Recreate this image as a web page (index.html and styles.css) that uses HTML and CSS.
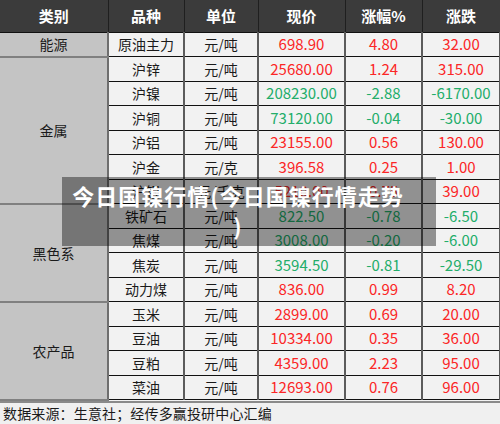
FILE: index.html
```html
<!DOCTYPE html>
<html lang="zh-CN">
<head>
<meta charset="utf-8">
<link rel="stylesheet" href="styles.css">
</head>
<body>
<div class="page">
  <table class="quotes">
    <colgroup>
      <col class="c1"><col class="c2"><col class="c3"><col class="c4"><col class="c5"><col class="c6">
    </colgroup>
    <thead>
      <tr class="head"><th>类别</th><th>品种</th><th>单位</th><th>现价</th><th>涨幅%</th><th>涨跌</th></tr>
    </thead>
    <tbody>
      <tr><td class="cat">能源</td><td>原油主力</td><td>元/吨</td><td class="num up">698.90</td><td class="num up">4.80</td><td class="num up">32.00</td></tr>
      <tr><td class="cat" rowspan="6">金属</td><td>沪锌</td><td>元/吨</td><td class="num up">25680.00</td><td class="num up">1.24</td><td class="num up">315.00</td></tr>
      <tr><td>沪镍</td><td>元/吨</td><td class="num dn">208230.00</td><td class="num dn">-2.88</td><td class="num dn">-6170.00</td></tr>
      <tr><td>沪铜</td><td>元/吨</td><td class="num dn">73120.00</td><td class="num dn">-0.04</td><td class="num dn">-30.00</td></tr>
      <tr><td>沪铝</td><td>元/吨</td><td class="num up">23155.00</td><td class="num up">0.56</td><td class="num up">130.00</td></tr>
      <tr><td>沪金</td><td>元/克</td><td class="num up">396.58</td><td class="num up">0.25</td><td class="num up">1.00</td></tr>
      <tr><td>沪银</td><td>元/千克</td><td class="num up">5210.00</td><td class="num up">0.75</td><td class="num up">39.00</td></tr>
      <tr><td class="cat" rowspan="4">黑色系</td><td>铁矿石</td><td>元/吨</td><td class="num dn">822.50</td><td class="num dn">-0.78</td><td class="num dn">-6.50</td></tr>
      <tr><td>焦煤</td><td>元/吨</td><td class="num dn">3008.00</td><td class="num dn">-0.20</td><td class="num dn">-6.00</td></tr>
      <tr><td>焦炭</td><td>元/吨</td><td class="num dn">3594.50</td><td class="num dn">-0.81</td><td class="num dn">-29.50</td></tr>
      <tr><td>动力煤</td><td>元/吨</td><td class="num up">836.00</td><td class="num up">0.99</td><td class="num up">8.20</td></tr>
      <tr><td class="cat" rowspan="4">农产品</td><td>玉米</td><td>元/吨</td><td class="num up">2899.00</td><td class="num up">0.69</td><td class="num up">20.00</td></tr>
      <tr><td>豆油</td><td>元/吨</td><td class="num up">10334.00</td><td class="num up">0.35</td><td class="num up">36.00</td></tr>
      <tr><td>豆粕</td><td>元/吨</td><td class="num up">4359.00</td><td class="num up">2.23</td><td class="num up">95.00</td></tr>
      <tr><td>菜油</td><td>元/吨</td><td class="num up">12693.00</td><td class="num up">0.76</td><td class="num up">96.00</td></tr>
    </tbody>
  </table>
  <div class="source">数据来源：生意社；经传多赢投研中心汇编</div>
  <div class="caption">今日国镍行情(今日国镍行情走势<br>)</div>
</div>
</body>
</html>
```
FILE: styles.css
```css
* { box-sizing: border-box; }
html, body {
  margin: 0;
  padding: 0;
  background: #f2f2f2;
}
body {
  font-family: "Noto Sans CJK SC", "Noto Sans", sans-serif;
  color: #1a1a1a;
}
.page {
  position: relative;
  width: 500px;
  height: 424px;
  overflow: hidden;
}
.quotes {
  width: 500px;
  border-collapse: collapse;
  table-layout: fixed;
}
.c1 { width: 108px; }
.c2 { width: 76px; }
.c3 { width: 74px; }
.c4 { width: 87px; }
.c5 { width: 77px; }
.c6 { width: 78px; }

.head { height: 32px; }
.head th {
  background: #3b3b3b;
  color: #ffffff;
  font-size: 15px;
  font-weight: 700;
  padding: 0;
  border-right: 1px solid #1f1f1f;
  border-bottom: 1px solid #111;
  text-align: center;
  vertical-align: middle;
}
tbody tr { height: 24.5px; }
tbody td {
  background: #f2f2f2;
  font-size: 14px;
  text-align: center;
  vertical-align: middle;
  padding: 0;
  line-height: 20px;
  border-bottom: 1px solid #111;
  border-right: 2px solid #5c5c5c;
  white-space: nowrap;
}
tbody td.cat {
  background: #c4c4c4;
  border-bottom: 2px solid #808080;
  border-right: 2px solid #6e6e6e;
}
tbody td.num { font-size: 15px; }
.up { color: #fb2626; }
.dn { color: #23ad6a; }

.source {
  height: 25px;
  border-top: 2px solid #8a8a8a;
  background: #f0f0f0;
  font-size: 14px;
  letter-spacing: 0.15px;
  line-height: 21px;
  padding-left: 3px;
  color: #1a1a1a;
}

.caption {
  position: absolute;
  left: 62px;
  top: 177px;
  width: 374px;
  height: 69px;
  background: rgba(0, 0, 0, 0.4);
  color: #ffffff;
  font-size: 22px;
  font-weight: 700;
  letter-spacing: 1px;
  line-height: 30px;
  padding: 3px 22px 0 0;
  text-align: center;
  white-space: nowrap;
}
```
